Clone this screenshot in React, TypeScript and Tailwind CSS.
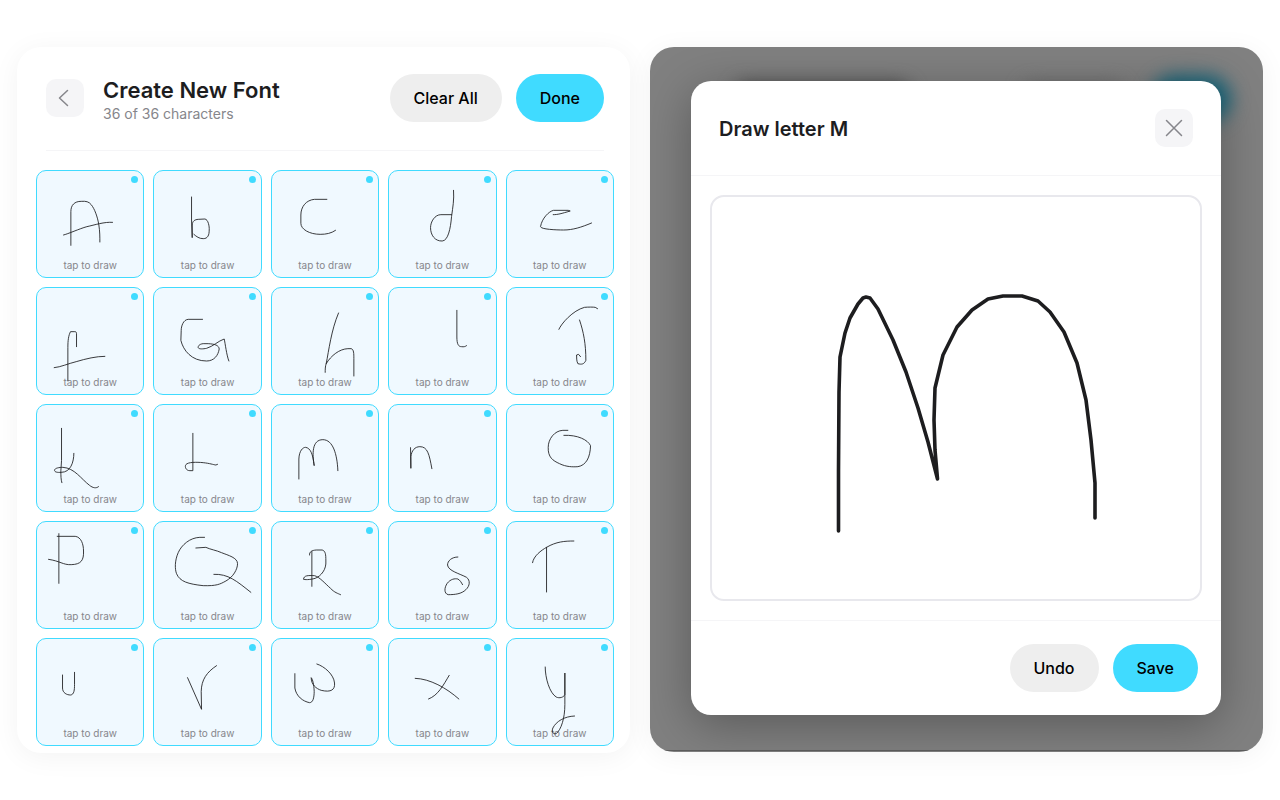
import React from 'react';

interface Glyph {
  name: string;
  path: string;
}

export default function App() {
  return (
    <div
      className="min-h-screen bg-white px-[17px] py-[47px] grid grid-cols-2 gap-5 items-start text-[#1d1d1f]"
      style={{ fontFamily: 'Inter, "Liberation Sans", sans-serif' }}
    >
      <FontPanel />
      <DrawPanel />
    </div>
  );
}

const FontPanel: React.FC = () => {
  return (
    <section className="rounded-3xl bg-white pb-[7px] shadow-[0_4px_28px_rgba(0,0,0,0.05)]">
      <header className="ml-[29px] mr-[26px] pt-[27px] pb-7 flex items-center border-b border-[#f5f5f7]">
        <button aria-label="Back" className="w-[38px] h-[38px] rounded-[10px] bg-[#f5f5f7] flex items-center justify-center">
          <svg className="w-6 h-6" viewBox="0 0 24 24" fill="none" stroke="#86868b" strokeWidth="1.5" strokeLinecap="round" strokeLinejoin="round">
            <path d="M14.500 4.500L6.500 12L14.500 19.500" />
          </svg>
        </button>

        <div className="ml-[19px] pt-1 flex-1">
          <h1 className="text-[22px] leading-6 font-semibold">Create New Font</h1>
          <p className="mt-1 text-sm leading-4 text-[#86868b]">36 of 36 characters</p>
        </div>

        <div className="flex gap-[14px]">
          <button className="h-12 px-6 rounded-full bg-[#eeeeee] text-base font-medium text-black">Clear All</button>
          <button className="h-12 px-6 rounded-full bg-[#40dbff] text-base font-medium text-black">Done</button>
        </div>
      </header>

      <div className="mt-[19px] pl-[19px] pr-4 grid grid-cols-5 gap-[9px]">
        {glyphs.map((glyph) => (
          <GlyphCell key={glyph.name} glyph={glyph} />
        ))}
      </div>
    </section>
  );
};

const GlyphCell: React.FC<{ glyph: Glyph }> = ({ glyph }) => {
  return (
    <button className="relative h-[108px] rounded-[10px] border border-[#40dbff] bg-[#f0f9ff] flex items-end justify-center pb-[5px]">
      <span className="text-[10px] leading-[14px] text-[#86868b]">tap to draw</span>
      <svg
        className="absolute inset-0 w-full h-full"
        viewBox="3 3 318 318"
        fill="none"
        stroke="#1d1d1f"
        strokeWidth="2.6"
        strokeLinecap="round"
        strokeLinejoin="round"
      >
        <path d={glyph.path} />
      </svg>
      <span className="absolute top-[5px] right-[5px] w-[7px] h-[7px] rounded-full bg-[#40dbff]"></span>
    </button>
  );
};

const DrawPanel: React.FC = () => {
  return (
    <section className="relative overflow-hidden rounded-3xl bg-[#808080] pl-[41px] pr-[42px] pt-[34px] pb-[37px] shadow-[0_4px_28px_rgba(0,0,0,0.05)]">
      {/* blurred page behind the dialog */}
      <div className="absolute top-9 left-[85px] w-[175px] h-6 rounded-full bg-[#4a4a4a] blur-[9px]"></div>
      <div className="absolute top-9 right-[140px] w-[100px] h-6 rounded-full bg-[#6a6a6a] blur-[9px]"></div>
      <div className="absolute top-7 right-8 w-20 h-12 rounded-full bg-[#17657a] blur-[9px]"></div>
      <div className="absolute bottom-px inset-x-0 h-px bg-[#5c5c5c]"></div>

      <div role="dialog" aria-labelledby="dialog-title" className="relative rounded-[20px] bg-white shadow-[0_10px_48px_rgba(0,0,0,0.3)]">
        <header className="p-7 flex items-center justify-between">
          <h2 id="dialog-title" className="pt-0.5 text-xl leading-7 font-semibold">Draw letter M</h2>
          <button aria-label="Close" className="w-[38px] h-[38px] rounded-[10px] bg-[#f5f5f7] flex items-center justify-center">
            <svg className="w-6 h-6" viewBox="0 0 24 24" fill="none" stroke="#86868b" strokeWidth="1.5" strokeLinecap="round">
              <path d="M4.500 4.500L19.500 19.500M19.500 4.500L4.500 19.500" />
            </svg>
          </button>
        </header>

        <div className="px-[19px] py-[19px] border-y border-[#f5f5f7]">
          <div className="rounded-[14px] border-2 border-[#e8e8ed]">
            <svg
              className="block w-full"
              viewBox="-1 0 488 402"
              fill="none"
              stroke="#1d1d1f"
              strokeWidth="3.6"
              strokeLinecap="round"
              strokeLinejoin="round"
            >
              <path d="M125.500 334V273L126 195L127 160L132 136L137 121L145 107L150 101L153 100L157 101L165 112L180 143L193 175L205 211L215 245L224.500 282L222 253L221 223L222 191L230 158L244 130L259 113L275 102L290 99H309L325 104L337 115L351 135L364 166L373 203L378 243L382 286V321" />
            </svg>
          </div>
        </div>

        <footer className="pt-[23px] pb-[23px] px-[23px] flex justify-end gap-[14px]">
          <button className="h-12 px-6 rounded-full bg-[#eeeeee] text-base font-medium text-black">Undo</button>
          <button className="h-12 px-6 rounded-full bg-[#40dbff] text-base font-medium text-black">Save</button>
        </footer>
      </div>
    </section>
  );
};

const glyphs: Glyph[] = [
  { name: 'A', path: 'M104 226V125C104 105 115 94 135 94C150 93 158 95 165 104C175 116 184 140 188 165C191 185 191 200 191 216M82 195C95 192 130 176 152 170C175 165 205 155 229 157' },
  { name: 'B', path: 'M115 81V150L117 203V165C118 152 125 149 135 148L155 147C165 148 169 170 168 180C168 195 164 206 150 206C138 206 130 200 122 193' },
  { name: 'C', path: 'M167 88H130C105 90 89 110 89 135V160C89 178 115 193 147 193C165 193 180 190 193 181' },
  { name: 'D', path: 'M196 61C198 90 194 110 190 140C187 175 180 212 162 213C140 214 127 195 127 173C127 155 140 134 158 134H190' },
  { name: 'E', path: 'M141 134C155 134 165 131 192 123L186 121H142C128 124 107 145 103 170C104 178 150 180 172 180C200 180 225 172 256 159' },
  { name: 'F', path: 'M121 179V140C121 135 118 133 114 134H103C97 145 95 160 95 182V281M54 242C75 240 95 230 120 224C150 215 180 208 206 208' },
  { name: 'G', path: 'M148 97H105C90 98 84 118 84 130L83 160C90 190 115 222 160 222C183 222 195 205 198 186C197 175 185 171 165 170H150C138 171 134 178 135 182C137 187 150 186 160 184C180 178 195 162 213 156C216 168 220 205 227 222' },
  { name: 'H', path: 'M202 78C180 130 173 190 165 230C162 238 162 248 162 256M165 230C180 205 205 186 230 185H240C248 187 248 200 248 215V267' },
  { name: 'I', path: 'M206 70V150C206 172 211 179 220 179C227 180 231 179 235 176' },
  { name: 'J', path: 'M158 127C165 110 200 70 235 61C245 60 262 60 267 61L274 65M220 99C232 135 239 170 239 220C234 232 226 233 215 230C210 220 212 212 211 204L217 202L223 209' },
  { name: 'K', path: 'M76 73V170L74 200C74 215 74 226 77 236M113 148C113 175 103 205 75 205C63 206 55 204 55 199C55 192 70 190 80 190C115 192 135 225 160 244C170 252 180 254 187 248' },
  { name: 'L', path: 'M119 88V200H110C98 200 94 188 98 182C104 174 130 174 150 176C170 178 180 182 188 183L193 181' },
  { name: 'M', path: 'M83 225V165C84 140 95 130 103 130C118 132 125 150 129 185C123 150 122 107 155 107C185 107 198 150 200 200' },
  { name: 'N', path: 'M67 131L68 193V158C70 140 80 128 95 128C118 128 123 150 131 194' },
  { name: 'O', path: 'M185 79H170C145 80 126 105 126 130C125 160 140 170 160 179C180 189 200 189 215 188C240 184 252 160 253 125C245 108 215 92 173 94' },
  { name: 'P', path: 'M68 38V187M63 46H117C135 48 142 70 142 90C143 118 135 130 105 131C80 132 72 120 37 115' },
  { name: 'Q', path: 'M154 49H140C110 50 85 72 75 95C64 120 65 145 70 158C80 182 105 189 150 194C190 195 200 190 218 180C240 168 253 145 253 128C253 110 225 103 205 95C190 88 170 85 158 79L128 81M182 160C225 158 250 180 293 214' },
  { name: 'R', path: 'M122 92V196M115 102C114 92 122 88 135 87H153C163 90 164 100 164 120C166 145 150 165 132 172C115 177 100 176 97 175C98 163 110 163 130 164C145 168 160 186 178 202C190 215 200 217 208 221' },
  { name: 'S', path: 'M209 108C190 108 178 120 178 132C180 150 215 158 235 169C247 178 245 195 233 206C220 219 200 221 180 221C167 218 168 200 177 187C187 174 200 172 209 174C216 178 219 184 223 191' },
  { name: 'T', path: 'M79 125C82 105 105 88 121 79C150 62 175 60 203 60M121 79V213' },
  { name: 'U', path: 'M79 111V150C79 165 92 171 103 171C114 170 115 155 115 140V103' },
  { name: 'V', path: 'M103 119L145 214L144 160C145 125 160 103 190 83' },
  { name: 'W', path: 'M71 107V150C75 175 95 190 115 194C125 194 129 180 129 160C128 140 125 125 120 119C120 140 135 152 150 157C180 164 192 155 190 135C188 110 160 85 137 78' },
  { name: 'X', path: 'M81 121C125 122 175 150 212 183M183 112C165 142 150 172 121 183' },
  { name: 'Y', path: 'M117 87C117 120 130 165 150 177C160 182 172 178 176 170V105V200C176 240 165 275 150 287C140 290 136 280 140 270C150 250 175 235 205 234' },
];
